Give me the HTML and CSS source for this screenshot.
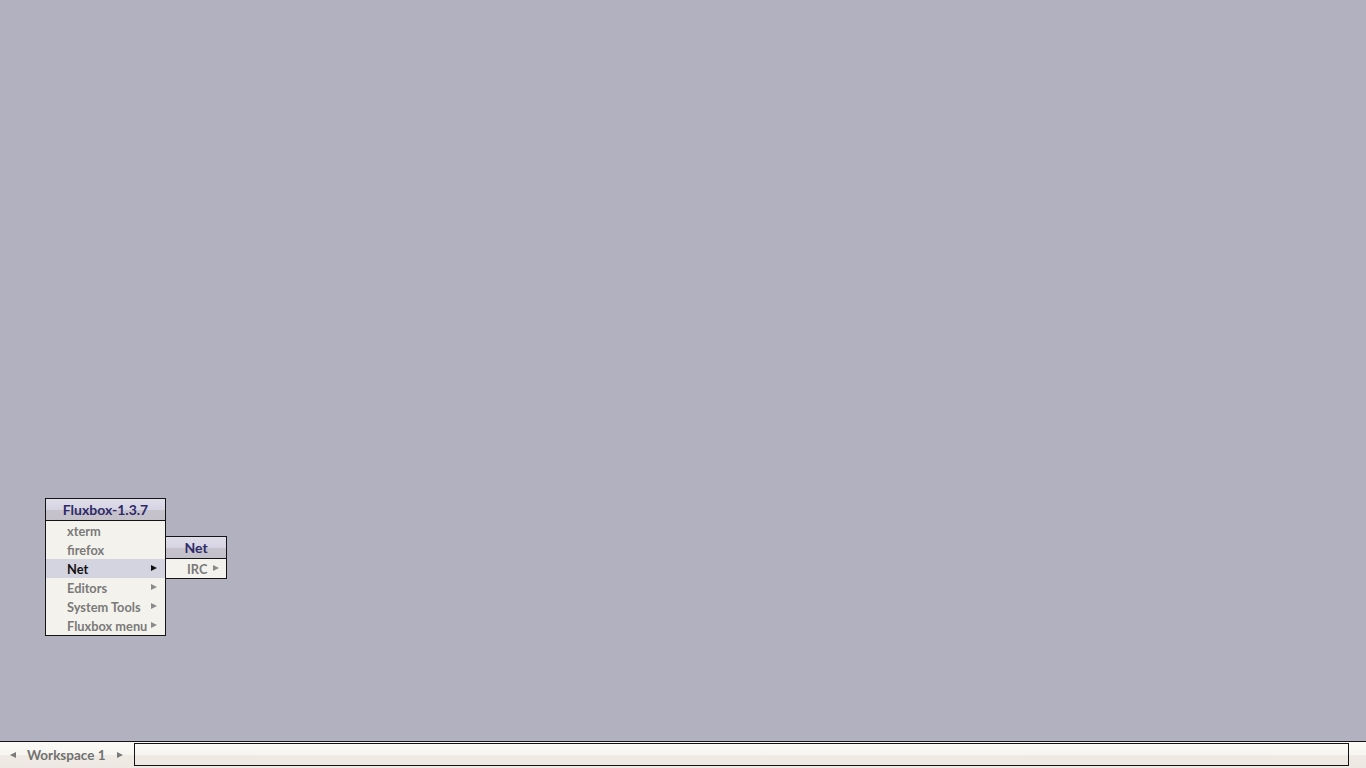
FILE: index.html
```html
<!DOCTYPE html>
<html>
<head>
<meta charset="utf-8">
<link rel="stylesheet" href="styles.css">
</head>
<body>
<div class="screen">
  <div class="desktop">
    <div class="menu main-menu">
      <div class="menu-title">Fluxbox-1.3.7</div>
      <div class="menu-items">
        <div class="item">xterm</div>
        <div class="item">firefox</div>
        <div class="item sub active">Net<span class="arrow"></span></div>
        <div class="item sub">Editors<span class="arrow"></span></div>
        <div class="item sub">System Tools<span class="arrow"></span></div>
        <div class="item sub">Fluxbox menu<span class="arrow"></span></div>
      </div>
    </div>
    <div class="menu net-menu">
      <div class="menu-title">Net</div>
      <div class="menu-items">
        <div class="item sub">IRC<span class="arrow"></span></div>
      </div>
    </div>
  </div>
  <div class="toolbar">
    <div class="workspace">
      <span class="ws-arrow left"></span>
      <span class="ws-name">Workspace 1</span>
      <span class="ws-arrow right"></span>
    </div>
    <div class="iconbar"></div>
    <div class="tail"></div>
  </div>
</div>
</body>
</html>
```

FILE: styles.css
```css
html, body {
  margin: 0;
  padding: 0;
  width: 100%;
  height: 100%;
  overflow: hidden;
}
body {
  font-family: Lato, "Open Sans", sans-serif;
  background: #b1b1bf;
}
.screen {
  display: flex;
  flex-direction: column;
  width: 1366px;
  height: 768px;
}
.desktop {
  flex: 1;
  position: relative;
}
.menu {
  position: absolute;
  box-sizing: border-box;
  border: 1px solid #141414;
  display: flex;
  flex-direction: column;
}
.main-menu {
  left: 45px;
  top: 498px;
  width: 121px;
}
.net-menu {
  left: 165px;
  top: 536px;
  width: 62px;
}
.menu-title {
  height: 21px;
  border-bottom: 1px solid #141414;
  background: linear-gradient(to bottom, #e0deeb 0%, #d6d4e2 50%, #c6c3cd 51%, #c3c0ca 100%);
  color: #2e2a68;
  font-weight: 700;
  font-size: 14px;
  line-height: 21px;
  text-align: center;
}
.menu-items {
  background: #f4f2ec;
}
.item {
  height: 19px;
  box-sizing: border-box;
  padding-top: 1px;
  line-height: 19px;
  font-size: 12.8px;
  font-weight: 700;
  color: #7a7a7a;
  padding-left: 21px;
  position: relative;
}
.item.active {
  background: #d4d3e0;
  color: #111;
}
.arrow {
  position: absolute;
  right: 8px;
  top: 6px;
  width: 0;
  height: 0;
  border-top: 3.5px solid transparent;
  border-bottom: 3.5px solid transparent;
  border-left: 6px solid #8a8a8a;
}
.item.active .arrow {
  border-left-color: #111;
}
.net-menu .arrow {
  right: 7px;
}
.toolbar {
  height: 27px;
  box-sizing: border-box;
  border-top: 1px solid #141414;
  background: linear-gradient(to bottom, #fbfaf6 0%, #f7f5f0 50%, #efebe4 51%, #ede9e2 100%);
  display: flex;
  align-items: stretch;
}
.workspace {
  width: 134px;
  display: flex;
  align-items: center;
  box-sizing: border-box;
  padding-left: 10px;
}
.ws-name {
  font-size: 13.5px;
  font-weight: 700;
  color: #717171;
  margin-left: 11px;
  margin-right: 11px;
}
.ws-arrow {
  width: 0;
  height: 0;
  border-top: 3.5px solid transparent;
  border-bottom: 3.5px solid transparent;
}
.ws-arrow.left {
  border-right: 6px solid #7a7a7a;
}
.ws-arrow.right {
  border-left: 6px solid #7a7a7a;
}
.iconbar {
  width: 1215px;
  box-sizing: border-box;
  margin: 1px 0 2px 0;
  border: 1px solid #141414;
  background: linear-gradient(to bottom, #fbfaf6 0%, #f7f5f0 50%, #efebe4 51%, #ede9e2 100%);
}
.tail {
  flex: 1;
}
```
